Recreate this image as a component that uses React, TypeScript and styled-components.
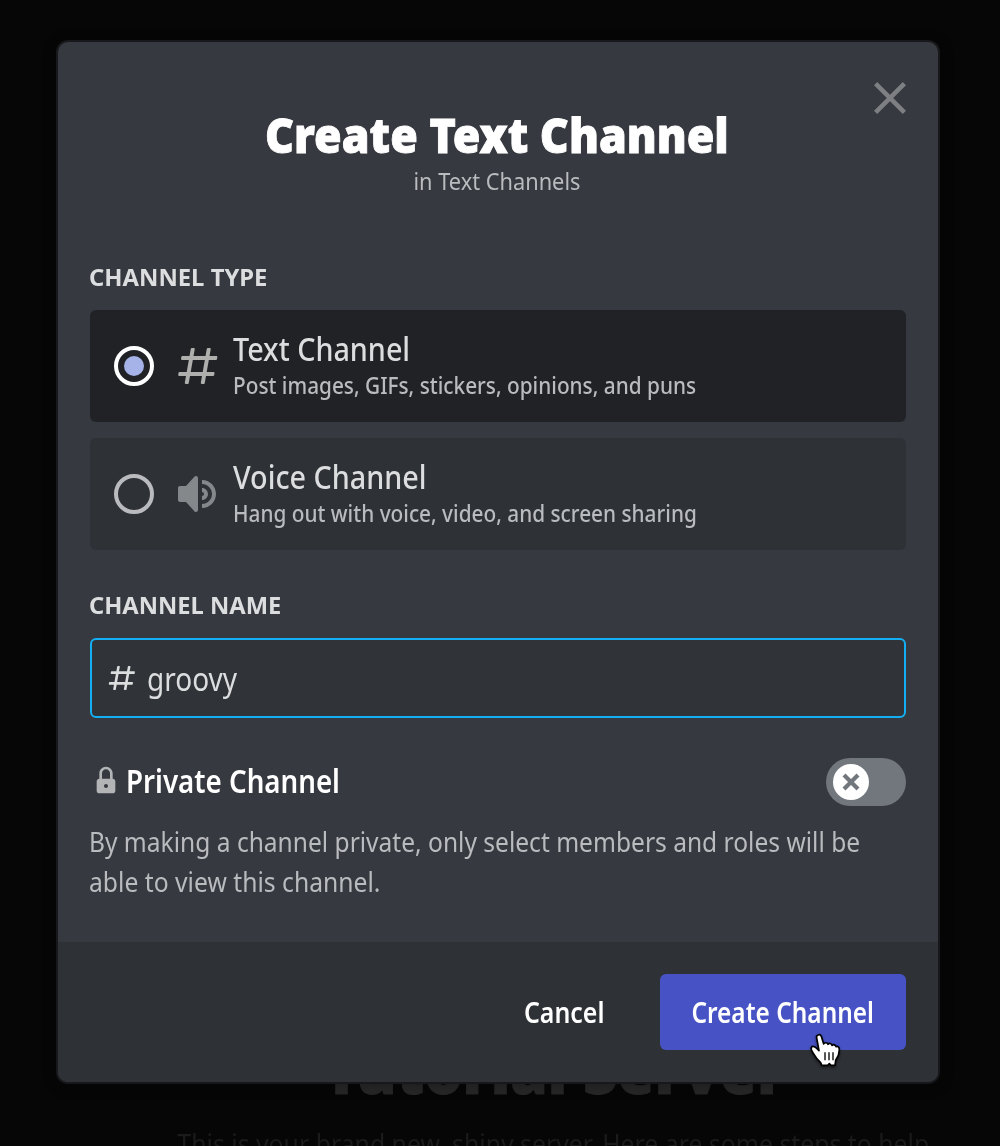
import React, { useState } from "react";
import styled, { createGlobalStyle } from "styled-components";

const GlobalStyle = createGlobalStyle`
  *, *::before, *::after { box-sizing: border-box; }
  body {
    margin: 0;
    background: #060606;
    font-family: "Noto Sans", "Open Sans", sans-serif;
    overflow: hidden;
  }
  button { font-family: inherit; border: 0; padding: 0; background: none; }
  svg { display: block; flex: none; }
`;

/* Narrows the type horizontally, as a condensed humanist face would look. */
const Narrow = styled.span<{ $x: number; $origin?: string }>`
  display: inline-block;
  white-space: nowrap;
  transform: scaleX(${(p) => p.$x});
  transform-origin: ${(p) => p.$origin ?? "left"} center;
`;

const Page = styled.div`
  position: relative;
  height: 1146px;
  overflow: hidden;
  background: #060606;
`;

const Welcome = styled.section`
  height: 100%;
  display: flex;
  flex-direction: column;
  align-items: center;
  padding: 1030px 0 0 108px;
`;

const WelcomeTitle = styled.div`
  flex: none;
  font-size: 64px;
  line-height: 80px;
  font-weight: 900;
  color: #272727;
  -webkit-text-stroke: 1px #272727;
`;

const WelcomeText = styled.div`
  flex: none;
  margin-top: 13px;
  margin-right: 2px;
  font-size: 28px;
  line-height: 40px;
  color: #1b1b1b;
`;

const Overlay = styled.div`
  position: absolute;
  inset: 0;
  display: flex;
  align-items: flex-start;
  padding: 42px 62px 0 58px;
`;

const Dialog = styled.div`
  position: relative;
  width: 880px;
  height: 1040px;
  display: flex;
  flex-direction: column;
  border-radius: 10px;
  background: #36393f;
  box-shadow: 0 0 0 2px #17181b, 0 2px 14px 2px rgba(0, 0, 0, 0.25);
`;

const Header = styled.header`
  display: flex;
  flex-direction: column;
  align-items: center;
  padding: 63px 2px 0 0;
  height: 218px;
`;

const Title = styled.h1`
  margin: 0;
  font-size: 48px;
  line-height: 60px;
  font-weight: 900;
  color: #fff;
  -webkit-text-stroke: 0.9px #fff;
`;

const Subtitle = styled.div`
  font-size: 24px;
  line-height: 32px;
  color: #b9bbbe;
`;

const CloseButton = styled.button`
  position: absolute;
  top: 32px;
  right: 24px;
  width: 48px;
  height: 48px;
  color: #7d7f83;
`;

const Body = styled.div`
  flex: 1;
  display: flex;
  flex-direction: column;
  padding: 0 32px;
`;

const Label = styled.div`
  height: 50px;
  margin-left: -1px;
  padding-top: 1px;
  font-size: 24px;
  line-height: 32px;
  font-weight: 700;
  color: #dcddde;
`;

const Options = styled.div`
  display: flex;
  flex-direction: column;
  gap: 16px;
  margin-bottom: 38px;
`;

const Option = styled.div<{ $selected: boolean }>`
  display: flex;
  align-items: center;
  height: 112px;
  padding-left: 24px;
  border-radius: 6px;
  background: ${(p) => (p.$selected ? "#202225" : "#2e3136")};
`;

const Radio = styled.div<{ $selected: boolean }>`
  width: 40px;
  height: 40px;
  display: grid;
  place-items: center;
  border-radius: 50%;
  border: 4px solid ${(p) => (p.$selected ? "#fff" : "#b9bbbe")};
  margin-right: 20px;
`;

const RadioDot = styled.div`
  width: 20px;
  height: 20px;
  border-radius: 50%;
  background: #a6b3e8;
`;

const IconTint = styled.div<{ $color: string; $lift?: number }>`
  color: ${(p) => p.$color};
  margin-bottom: ${(p) => p.$lift ?? 0}px;
`;

const OptionText = styled.div`
  display: flex;
  flex-direction: column;
  gap: 1px;
  margin-left: 11px;
  margin-bottom: 3px;
`;

const OptionTitle = styled.div`
  font-size: 32px;
  line-height: 40px;
  font-weight: 540;
  color: #dcddde;
`;

const OptionDescription = styled.div`
  font-size: 24px;
  line-height: 30px;
  font-weight: 540;
  color: #b9bbbe;
`;

const NameField = styled.div`
  display: flex;
  align-items: center;
  height: 80px;
  padding-left: 14px;
  border: 2px solid #14aff2;
  border-radius: 6px;
  background: #303337;
  color: #dcddde;
  font-size: 32px;
  line-height: 40px;
`;

const NameText = styled.div`
  margin-left: 9px;
  padding-top: 2px;
`;

const PrivateRow = styled.div`
  display: flex;
  align-items: center;
  height: 48px;
  margin-top: 40px;
`;

const PrivateTitle = styled.div`
  flex: 1;
  margin-left: 4px;
  padding-bottom: 3px;
  font-size: 32px;
  line-height: 40px;
  font-weight: 580;
  color: #fff;
`;

const Toggle = styled.button`
  width: 80px;
  height: 48px;
  padding: 0 7px;
  display: flex;
  align-items: center;
  border-radius: 24px;
  background: #72767d;
`;

const Knob = styled.span`
  width: 36px;
  height: 36px;
  display: grid;
  place-items: center;
  border-radius: 50%;
  background: #fff;
`;

const Note = styled.div`
  display: flex;
  flex-direction: column;
  margin: 15px 0 0 -1px;
  font-size: 28px;
  line-height: 40px;
  color: #b9bbbe;
`;

const Footer = styled.footer`
  display: flex;
  align-items: center;
  justify-content: flex-end;
  height: 140px;
  padding-right: 32px;
  border-radius: 0 0 10px 10px;
  background: #2e3136;
`;

const Button = styled.button<{ $primary?: boolean }>`
  position: relative;
  width: ${(p) => (p.$primary ? 246 : 192)}px;
  height: 76px;
  display: flex;
  align-items: center;
  justify-content: center;
  border-radius: 6px;
  background: ${(p) => (p.$primary ? "#4752c4" : "transparent")};
  color: #fff;
  font-size: 28px;
  line-height: 40px;
  font-weight: 580;
`;

const Pointer = styled.div`
  position: absolute;
  left: 148px;
  top: 58px;
`;

const HashIcon = ({ size }: { size: number }) => (
  <svg width={size} height={size} viewBox="0 0 24 24" fill="currentColor">
    <path
      fillRule="evenodd"
      clipRule="evenodd"
      d="M5.88657 21C5.57547 21 5.3399 20.7189 5.39427 20.4126L6.00001 17H2.59511C2.28449 17 2.04905 16.7198 2.10259 16.4138L2.27759 15.4138C2.31946 15.1746 2.52722 15 2.77011 15H6.35001L7.41001 9H4.00511C3.69449 9 3.45905 8.71977 3.51259 8.41381L3.68759 7.41381C3.72946 7.17456 3.93722 7 4.18011 7H7.76001L8.39677 3.41262C8.43914 3.17391 8.64664 3 8.88907 3H9.87344C10.1845 3 10.4201 3.28107 10.3657 3.58738L9.76001 7H15.76L16.3968 3.41262C16.4391 3.17391 16.6466 3 16.8891 3H17.8734C18.1845 3 18.4201 3.28107 18.3657 3.58738L17.76 7H21.1649C21.4755 7 21.711 7.28023 21.6574 7.58619L21.4824 8.58619C21.4406 8.82544 21.2328 9 20.9899 9H17.41L16.35 15H19.7549C20.0655 15 20.301 15.2802 20.2474 15.5862L20.0724 16.5862C20.0306 16.8254 19.8228 17 19.5799 17H16L15.3632 20.5874C15.3209 20.8261 15.1134 21 14.8709 21H13.8866C13.5755 21 13.3399 20.7189 13.3943 20.4126L14 17H8.00001L7.36325 20.5874C7.32088 20.8261 7.11337 21 6.87094 21H5.88657ZM9.41045 9L8.35045 15H14.3504L15.4104 9H9.41045Z"
    />
  </svg>
);

const SpeakerIcon = () => (
  <svg width={48} height={48} viewBox="0 0 24 24" fill="currentColor">
    <path
      fillRule="evenodd"
      clipRule="evenodd"
      d="M11.383 3.07904C11.009 2.92504 10.579 3.01004 10.293 3.29604L6 8.00204H3C2.45 8.00204 2 8.45304 2 9.00204V15.002C2 15.552 2.45 16.002 3 16.002H6L10.293 20.71C10.579 20.996 11.009 21.082 11.383 20.927C11.757 20.772 12 20.407 12 20.002V4.00204C12 3.59904 11.757 3.23204 11.383 3.07904ZM14 5.00195V7.00195C16.757 7.00195 19 9.24595 19 12.002C19 14.759 16.757 17.002 14 17.002V19.002C17.86 19.002 21 15.863 21 12.002C21 8.14295 17.86 5.00195 14 5.00195ZM14 9.00195C15.654 9.00195 17 10.349 17 12.002C17 13.657 15.654 15.002 14 15.002V13.002C14.551 13.002 15 12.553 15 12.002C15 11.451 14.551 11.002 14 11.002V9.00195Z"
    />
  </svg>
);

const LockIcon = () => (
  <svg width={32} height={32} viewBox="0 0 24 24" fill="currentColor">
    <path
      fillRule="evenodd"
      d="M17 11V7C17 4.243 14.756 2 12 2C9.242 2 7 4.243 7 7V11C5.897 11 5 11.896 5 13V20C5 21.103 5.897 22 7 22H17C18.103 22 19 21.103 19 20V13C19 11.896 18.103 11 17 11ZM12 18C11.172 18 10.5 17.328 10.5 16.5C10.5 15.672 11.172 15 12 15C12.828 15 13.5 15.672 13.5 16.5C13.5 17.328 12.828 18 12 18ZM15 11H9V7C9 5.346 10.346 4 12 4C13.654 4 15 5.346 15 7V11Z"
    />
  </svg>
);

const CloseIcon = () => (
  <svg width={48} height={48} viewBox="0 0 24 24" fill="currentColor">
    <path d="M18.4 4L12 10.4L5.6 4L4 5.6L10.4 12L4 18.4L5.6 20L12 13.6L18.4 20L20 18.4L13.6 12L20 5.6L18.4 4Z" />
  </svg>
);

const KnobCross = () => (
  <svg width={20} height={20} viewBox="0 0 20 20" stroke="#72767d" strokeWidth={4.2}>
    <path d="M3 3L17 17M17 3L3 17" />
  </svg>
);

const HandIcon = () => (
  <svg width={40} height={44} viewBox="24 36 120 132" style={{ overflow: "visible" }}>
    <defs>
      <filter id="handShadow" x="-30%" y="-30%" width="160%" height="170%">
        <feDropShadow dx="0" dy="5" stdDeviation="4" floodColor="#000" floodOpacity="0.5" />
      </filter>
    </defs>
    <g filter="url(#handShadow)">
      <path
        d="M50 54C47 45 60 40 64 49L71 72C73 67 82 67 84 73C87 68 95 70 96 76C100 72 107 75 108 80C114 77 118 82 118 89C118 104 114 111 107 121L105 136H93L88 131L83 136H65L62 128C55 122 47 112 42 103C38 96 31 90 34 82C38 75 47 81 57 92Z"
        fill="#fff"
        stroke="#000"
        strokeWidth={5}
        strokeLinejoin="round"
      />
      <path d="M75 97V121M87 97V121M99 97V121" stroke="#000" strokeWidth={4} />
    </g>
  </svg>
);

const channelTypes = [
  {
    id: "text",
    name: "Text Channel",
    nameScale: 0.898,
    description: "Post images, GIFs, stickers, opinions, and puns",
    descriptionScale: 0.866,
    tint: "#afafae",
    icon: <HashIcon size={48} />,
  },
  {
    id: "voice",
    name: "Voice Channel",
    nameScale: 0.898,
    description: "Hang out with voice, video, and screen sharing",
    descriptionScale: 0.866,
    tint: "#84888b",
    icon: <SpeakerIcon />,
  },
];

export default function App() {
  const [selected, setSelected] = useState("text");
  return (
    <Page>
      <GlobalStyle />
      <Welcome>
        <WelcomeTitle>
          <Narrow $x={0.94} $origin="center">Tutorial Server</Narrow>
        </WelcomeTitle>
        <WelcomeText>
          <Narrow $x={0.886} $origin="center">
            This is your brand new, shiny server. Here are some steps to help
          </Narrow>
        </WelcomeText>
      </Welcome>
      <Overlay>
        <Dialog role="dialog">
          <Header>
            <Title>
              <Narrow $x={0.932} $origin="center">Create Text Channel</Narrow>
            </Title>
            <Subtitle>
              <Narrow $x={0.908} $origin="center">in Text Channels</Narrow>
            </Subtitle>
          </Header>
          <CloseButton aria-label="Close">
            <CloseIcon />
          </CloseButton>
          <Body>
            <Label>
              <Narrow $x={0.993}>CHANNEL TYPE</Narrow>
            </Label>
            <Options>
              {channelTypes.map((type) => (
                <Option key={type.id} $selected={selected === type.id} onClick={() => setSelected(type.id)}>
                  <Radio $selected={selected === type.id}>{selected === type.id && <RadioDot />}</Radio>
                  <IconTint $color={type.tint}>{type.icon}</IconTint>
                  <OptionText>
                    <OptionTitle>
                      <Narrow $x={type.nameScale}>{type.name}</Narrow>
                    </OptionTitle>
                    <OptionDescription>
                      <Narrow $x={type.descriptionScale}>{type.description}</Narrow>
                    </OptionDescription>
                  </OptionText>
                </Option>
              ))}
            </Options>
            <Label>
              <Narrow $x={0.988}>CHANNEL NAME</Narrow>
            </Label>
            <NameField>
              <HashIcon size={32} />
              <NameText>
                <Narrow $x={0.875}>groovy</Narrow>
              </NameText>
            </NameField>
            <PrivateRow>
              <IconTint $color="#b2b4b6" $lift={4}>
                <LockIcon />
              </IconTint>
              <PrivateTitle>
                <Narrow $x={0.866}>Private Channel</Narrow>
              </PrivateTitle>
              <Toggle role="switch" aria-checked={false}>
                <Knob>
                  <KnobCross />
                </Knob>
              </Toggle>
            </PrivateRow>
            <Note>
              <Narrow $x={0.877}>By making a channel private, only select members and roles will be</Narrow>
              <Narrow $x={0.882}>able to view this channel.</Narrow>
            </Note>
          </Body>
          <Footer>
            <Button>
              <Narrow $x={0.89} $origin="center">Cancel</Narrow>
            </Button>
            <Button $primary>
              <Narrow $x={0.872} $origin="center">Create Channel</Narrow>
              <Pointer>
                <HandIcon />
              </Pointer>
            </Button>
          </Footer>
        </Dialog>
      </Overlay>
    </Page>
  );
}
